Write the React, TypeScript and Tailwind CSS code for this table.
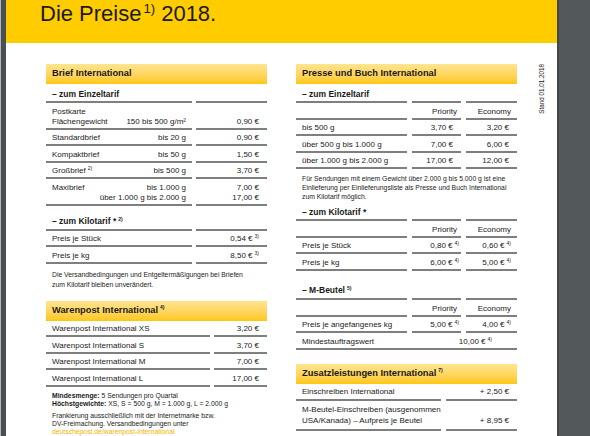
import React from 'react';

const cell = 'border-b-2 border-[#7f7f7f] pt-[3.5px] pb-[1px] leading-[10px] whitespace-nowrap';

function Sup({ children }: { children: React.ReactNode }) {
  return <span className="relative -top-[3px] ml-[2px] text-[5px] leading-none">{children}</span>;
}

function SectionBar({ children, className = '' }: { children: React.ReactNode; className?: string }) {
  return (
    <div
      className={`flex h-[20px] items-center bg-linear-to-b from-[#ffe58f] to-[#ffc700] pl-[6px] text-[9.3px] font-bold ${className}`}
    >
      {children}
    </div>
  );
}

function SubHead({ children, className = '' }: { children: React.ReactNode; className?: string }) {
  return <div className={`pl-[6px] text-[8.5px] font-bold leading-[10px] ${className}`}>{children}</div>;
}

function Lines({ items }: { items: React.ReactNode[] }) {
  return (
    <>
      {items.map((t, i) => (
        <div key={i} className="h-[10px]">
          {t}
        </div>
      ))}
    </>
  );
}

const briefRows: { label: React.ReactNode[]; weight: React.ReactNode[]; price: React.ReactNode[] }[] = [
  { label: ['Postkarte', 'Flächengewicht'], weight: ['', '150 bis 500 g/m²'], price: ['', '0,90 €'] },
  { label: ['Standardbrief'], weight: ['bis 20 g'], price: ['0,90 €'] },
  { label: ['Kompaktbrief'], weight: ['bis 50 g'], price: ['1,50 €'] },
  { label: [<>Großbrief<Sup>2)</Sup></>], weight: ['bis 500 g'], price: ['3,70 €'] },
  { label: ['Maxibrief', ''], weight: ['bis 1.000 g', 'über 1.000 g bis 2.000 g'], price: ['7,00 €', '17,00 €'] },
];

function BriefColumn() {
  return (
    <div className="w-[221px] shrink-0 text-[8px]">
      <SectionBar>Brief International</SectionBar>
      <SubHead className="mt-[5px] mb-[2px]">– zum Einzeltarif</SubHead>
      <div className="grid grid-cols-[146px_71px] gap-x-[4px]">
        {briefRows.map((r, i) => (
          <React.Fragment key={i}>
            <div className={`${cell} ${i === 0 ? 'border-t-2' : ''} flex justify-between pl-[6px] pr-[6px]`}>
              <div>
                <Lines items={r.label} />
              </div>
              <div className="text-right">
                <Lines items={r.weight} />
              </div>
            </div>
            <div className={`${cell} ${i === 0 ? 'border-t-2' : ''} pr-[8px] text-right`}>
              <Lines items={r.price} />
            </div>
          </React.Fragment>
        ))}
      </div>

      <SubHead className="mt-[10px] mb-[3px]">
        – zum Kilotarif *<Sup>2)</Sup>
      </SubHead>
      <div className="grid grid-cols-[146px_71px] gap-x-[4px]">
        <div className={`${cell} border-t-2 pl-[6px]`}>Preis je Stück</div>
        <div className={`${cell} border-t-2 pr-[8px] text-right`}>
          0,54 €<Sup>3)</Sup>
        </div>
        <div className={`${cell} pl-[6px]`}>Preis je kg</div>
        <div className={`${cell} pr-[8px] text-right`}>
          8,50 €<Sup>3)</Sup>
        </div>
      </div>
      <p className="mt-[6px] pl-[6px] text-[6.8px] leading-[10px]">
        Die Versandbedingungen und Entgeltermäßigungen bei Briefen
        <br />
        zum Kilotarif bleiben unverändert.
      </p>

      <SectionBar className="mt-[11px]">
        Warenpost International<Sup>4)</Sup>
      </SectionBar>
      <div className="grid grid-cols-[164px_53px] gap-x-[4px]">
        {[
          ['Warenpost International XS', '3,20 €'],
          ['Warenpost International S', '3,70 €'],
          ['Warenpost International M', '7,00 €'],
          ['Warenpost International L', '17,00 €'],
        ].map(([l, p]) => (
          <React.Fragment key={l}>
            <div className={`${cell} pl-[6px]`}>{l}</div>
            <div className={`${cell} pr-[8px] text-right`}>{p}</div>
          </React.Fragment>
        ))}
      </div>
      <div className="mt-[5px] pl-[6px] text-[6.8px] leading-[8px] whitespace-nowrap">
        <div>
          <span className="font-bold">Mindesmenge:</span> 5 Sendungen pro Quartal
        </div>
        <div>
          <span className="font-bold">Höchstgewichte:</span> XS, S = 500 g, M = 1.000 g, L = 2.000 g
        </div>
        <div className="mt-[4px]">Frankierung ausschließlich mit der Internetmarke bzw.</div>
        <div>DV-Freimachung. Versandbedingungen unter</div>
        <div className="text-[#f5b400]">deutschepost.de/warenpost-international</div>
      </div>
    </div>
  );
}

function PrioHeader({ top = false }: { top?: boolean }) {
  const t = top ? 'border-t-2' : '';
  return (
    <>
      <div className={`${cell} ${t}`} />
      <div className={`${cell} ${t} pr-[4px] text-right`}>Priority</div>
      <div className={`${cell} ${t} pr-[6px] text-right`}>Economy</div>
    </>
  );
}

function PrioRow({ label, a, b, sup = false }: { label: string; a: string; b: string; sup?: boolean }) {
  return (
    <>
      <div className={`${cell} pl-[6px]`}>{label}</div>
      <div className={`${cell} ${sup ? 'pr-[2px]' : 'pr-[8px]'} text-right`}>
        {a}
        {sup && <Sup>4)</Sup>}
      </div>
      <div className={`${cell} ${sup ? 'pr-[6px]' : 'pr-[8px]'} text-right`}>
        {b}
        {sup && <Sup>4)</Sup>}
      </div>
    </>
  );
}

function PresseColumn() {
  return (
    <div className="ml-[29px] w-[221px] shrink-0 text-[8px]">
      <SectionBar>Presse und Buch International</SectionBar>
      <SubHead className="mt-[5px] mb-[2px]">– zum Einzeltarif</SubHead>
      <div className="grid grid-cols-[111px_49px_51px] gap-x-[5px]">
        <PrioHeader top />
        <PrioRow label="bis 500 g" a="3,70 €" b="3,20 €" />
        <PrioRow label="über 500 g bis 1.000 g" a="7,00 €" b="6,00 €" />
        <PrioRow label="über 1.000 g bis 2.000 g" a="17,00 €" b="12,00 €" />
      </div>
      <p className="mt-[4.5px] pl-[6px] text-[6.8px] leading-[9px] whitespace-nowrap">
        Für Sendungen mit einem Gewicht über 2.000 g bis 5.000 g ist eine
        <br />
        Einlieferung per Einlieferungsliste als Presse und Buch International
        <br />
        zum Kilotarif möglich.
      </p>

      <SubHead className="mt-[6.5px] mb-[2px]">– zum Kilotarif *</SubHead>
      <div className="grid grid-cols-[111px_49px_51px] gap-x-[5px]">
        <PrioHeader top />
        <PrioRow label="Preis je Stück" a="0,80 €" b="0,60 €" sup />
        <PrioRow label="Preis je kg" a="6,00 €" b="5,00 €" sup />
      </div>

      <SubHead className="mt-[14.5px] mb-[3px]">
        – M-Beutel<Sup>5)</Sup>
      </SubHead>
      <div className="grid grid-cols-[111px_49px_51px] gap-x-[5px]">
        <PrioHeader top />
        <PrioRow label="Preis je angefangenes kg" a="5,00 €" b="4,00 €" sup />
        <div className="col-span-3 flex justify-between border-b-2 border-[#7f7f7f] pt-[3.5px] pb-[1px] pl-[6px] pr-[25px] leading-[10px]">
          <span>Mindestauftragswert</span>
          <span>
            10,00 €<Sup>4)</Sup>
          </span>
        </div>
      </div>

      <SectionBar className="mt-[14px]">
        Zusatzleistungen International<Sup>7)</Sup>
      </SectionBar>
      <div className="grid grid-cols-[145px_71px] gap-x-[5px]">
        <div className="border-b-2 border-[#7f7f7f] pt-[3.5px] pb-[2px] pl-[6px] leading-[10px]">
          Einschreiben International
        </div>
        <div className="border-b-2 border-[#7f7f7f] pt-[3.5px] pb-[2px] pr-[8px] text-right leading-[10px]">
          + 2,50 €
        </div>
        <div className="border-b-2 border-[#7f7f7f] pt-[2.5px] pb-[3.5px] pl-[6px] leading-[11px] whitespace-nowrap">
          M-Beutel-Einschreiben (ausgenommen
          <br />
          USA/Kanada) – Aufpreis je Beutel
        </div>
        <div className="flex items-end justify-end border-b-2 border-[#7f7f7f] pt-[2.5px] pb-[3.5px] pr-[8px] leading-[11px]">
          + 8,95 €
        </div>
      </div>
    </div>
  );
}

export default function App() {
  return (
    <div className="flex h-[436px] w-[590px] overflow-hidden bg-white font-['Liberation_Sans',Arial,sans-serif] text-[#1a1a1a]">
      <div className="w-[1px] bg-[#b5b8ba]" />
      <div className="w-[5px] bg-[#4a4f53]" />
      <div className="w-[551px] shrink-0 bg-white">
        <div className="h-[43px] bg-[#ffcc00] pl-[34px] pt-[2.5px] text-[22px] leading-none">
          Die Preise<span className="relative -top-[8px] ml-[2px] text-[13px]">1)</span> 2018.
        </div>
        <div className="flex pl-[40px] pt-[21px]">
          <BriefColumn />
          <PresseColumn />
          <div className="ml-[21px] rotate-180 self-start whitespace-nowrap text-[6.3px] leading-[7px] [writing-mode:vertical-rl]">
            Stand 01.01.2018
          </div>
        </div>
      </div>
      <div className="flex-1 border-l-2 border-[#43474a] bg-[#53585b]" />
    </div>
  );
}
